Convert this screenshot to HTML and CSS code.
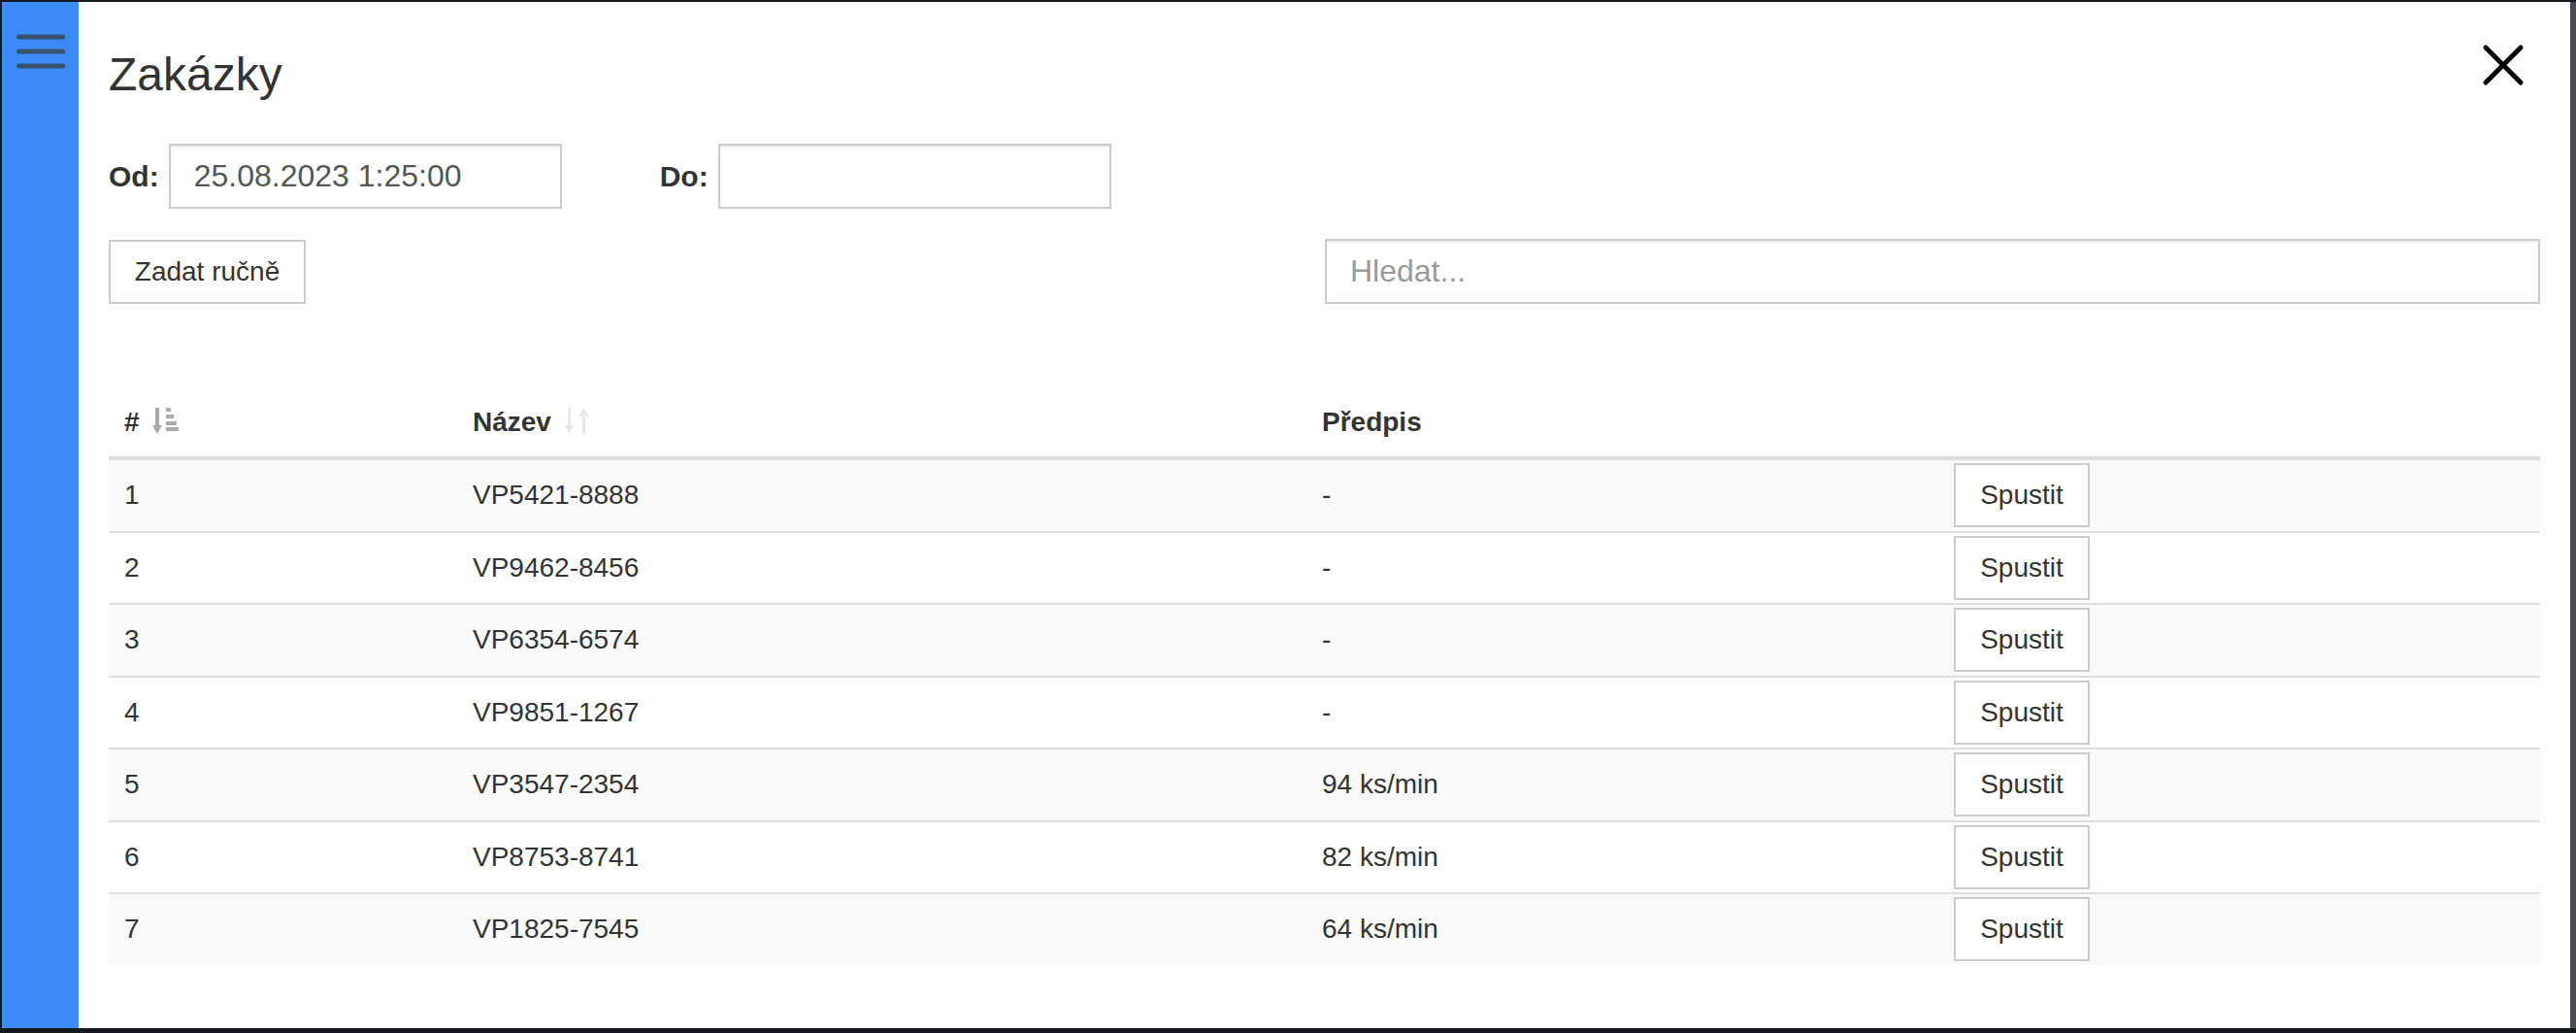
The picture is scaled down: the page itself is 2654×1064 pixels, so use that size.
FILE: index.html
```html
<!DOCTYPE html>
<html lang="cs">

<head>
    <meta charset="UTF-8">
    <meta name="viewport" content="width=device-width, initial-scale=1.0">
    <title>Zakázky</title>
    <link rel="stylesheet" href="styles.css">
</head>

<body>
    <div class="app">
        <div class="sidebar">
            <svg class="menu-icon" width="50" height="40" viewBox="0 0 50 40">
                <g stroke="#37516f" stroke-width="5" stroke-linecap="round">
                    <line x1="2.5" y1="5" x2="47.5" y2="5" />
                    <line x1="2.5" y1="20" x2="47.5" y2="20" />
                    <line x1="2.5" y1="35" x2="47.5" y2="35" />
                </g>
            </svg>
        </div>

        <div class="modal">
            <div class="modal-header">
                <h1>Zakázky</h1>
                <button class="close-btn">
                    <svg width="44" height="44" viewBox="0 0 44 44">
                        <g stroke="#000" stroke-width="5" stroke-linecap="round">
                            <line x1="4" y1="4" x2="40" y2="40" />
                            <line x1="40" y1="4" x2="4" y2="40" />
                        </g>
                    </svg>
                </button>
            </div>

            <div class="dates">
                <label>Od:</label>
                <input type="text" class="field" value="25.08.2023 1:25:00">
                <label class="to-label">Do:</label>
                <input type="text" class="field">
            </div>

            <div class="tools">
                <button class="btn manual-btn">Zadat ručně</button>
                <input type="text" class="field search" placeholder="Hledat...">
            </div>

            <table class="orders">
                <colgroup>
                    <col style="width: 359px">
                    <col style="width: 875px">
                    <col style="width: 651px">
                    <col style="width: 620px">
                </colgroup>
                <thead>
                    <tr>
                        <th>#
                            <svg class="sort-icon" width="28" height="28" viewBox="0 0 28 28">
                                <g fill="#aaaaaa">
                                    <rect x="3" y="0" width="4" height="20" />
                                    <polygon points="0,18 10,18 5,27" />
                                    <rect x="14" y="0" width="5" height="4" />
                                    <rect x="14" y="7" width="8" height="4" />
                                    <rect x="14" y="14" width="11" height="4" />
                                    <rect x="14" y="20" width="13" height="4" />
                                </g>
                            </svg>
                        </th>
                        <th>Název
                            <svg class="sort-icon" width="28" height="28" viewBox="0 0 28 28">
                                <g fill="#e8e8e8">
                                    <rect x="3" y="0" width="3" height="20" />
                                    <polygon points="0,18 9,18 4.5,27" />
                                    <rect x="18" y="8" width="3" height="19" />
                                    <polygon points="14,9 25,9 19.5,0" />
                                </g>
                            </svg>
                        </th>
                        <th>Předpis</th>
                        <th></th>
                    </tr>
                </thead>
                <tbody>
                    <tr>
                        <td>1</td>
                        <td>VP5421-8888</td>
                        <td>-</td>
                        <td><button class="btn run-btn">Spustit</button></td>
                    </tr>
                    <tr>
                        <td>2</td>
                        <td>VP9462-8456</td>
                        <td>-</td>
                        <td><button class="btn run-btn">Spustit</button></td>
                    </tr>
                    <tr>
                        <td>3</td>
                        <td>VP6354-6574</td>
                        <td>-</td>
                        <td><button class="btn run-btn">Spustit</button></td>
                    </tr>
                    <tr>
                        <td>4</td>
                        <td>VP9851-1267</td>
                        <td>-</td>
                        <td><button class="btn run-btn">Spustit</button></td>
                    </tr>
                    <tr>
                        <td>5</td>
                        <td>VP3547-2354</td>
                        <td>94 ks/min</td>
                        <td><button class="btn run-btn">Spustit</button></td>
                    </tr>
                    <tr>
                        <td>6</td>
                        <td>VP8753-8741</td>
                        <td>82 ks/min</td>
                        <td><button class="btn run-btn">Spustit</button></td>
                    </tr>
                    <tr>
                        <td>7</td>
                        <td>VP1825-7545</td>
                        <td>64 ks/min</td>
                        <td><button class="btn run-btn">Spustit</button></td>
                    </tr>
                </tbody>
            </table>
        </div>
    </div>
</body>

</html>
```

FILE: styles.css
```css
* {
    box-sizing: border-box;
}

body {
    margin: 0;
    background-color: #15191d;
    font-family: "Liberation Sans", Arial, sans-serif;
    color: #333;
}

.app {
    display: flex;
    height: 1064px;
    padding: 2px 0 5px 2px;
}

.sidebar {
    width: 79px;
    background-color: #3c8af6;
    padding: 31px 0 0 15px;
}

.menu-icon {
    display: block;
}

.modal {
    width: 2573px;
    background-color: white;
    padding: 48px 31px 0 31px;
    border-right: 6px solid #4a4d52;
}

.modal-header {
    display: flex;
    justify-content: space-between;
    align-items: flex-start;
}

h1 {
    margin: 0;
    font-size: 48px;
    line-height: 53px;
    font-weight: normal;
    color: #333;
}

.close-btn {
    border: none;
    background: none;
    padding: 0;
    margin: -5px 16px 0 0;
    cursor: pointer;
}

.close-btn svg {
    display: block;
}

.dates {
    display: flex;
    align-items: center;
    margin-top: 45px;
}

.dates label {
    font-weight: bold;
    font-size: 30px;
    margin-right: 10px;
}

.dates .to-label {
    margin-left: 101px;
}

.field {
    height: 67px;
    width: 405px;
    border: 2px solid #ccc;
    box-shadow: inset 0 2px 2px rgba(0, 0, 0, 0.075);
    padding: 0 24px;
    font-family: "Liberation Sans", Arial, sans-serif;
    font-size: 32px;
    color: #555;
    outline: none;
}

.field::placeholder {
    color: #999;
}

.tools {
    display: flex;
    justify-content: space-between;
    align-items: flex-start;
    margin-top: 31px;
}

.search {
    width: 1252px;
}

.btn {
    background-color: white;
    border: 2px solid #ccc;
    font-family: "Liberation Sans", Arial, sans-serif;
    font-size: 28px;
    color: #333;
    cursor: pointer;
}

.manual-btn {
    height: 66px;
    width: 203px;
    padding: 0;
    margin-top: 1px;
}

.run-btn {
    height: 66px;
    width: 140px;
    padding: 0;
    vertical-align: middle;
}

.orders {
    width: 100%;
    margin-top: 82px;
    border-collapse: separate;
    border-spacing: 0;
    table-layout: fixed;
    font-size: 28px;
}

.orders th {
    text-align: left;
    font-weight: bold;
    line-height: 34px;
    padding: 23px 16px 18px 16px;
    border-bottom: 4px solid #ddd;
    white-space: nowrap;
}

.sort-icon {
    vertical-align: -4px;
    margin-left: 6px;
}

.orders td {
    line-height: 34px;
    padding: 3.25px 16px;
    border-top: 2px solid #ddd;
    vertical-align: middle;
}

.orders tbody tr:first-child td {
    border-top: none;
}

.orders tbody tr:nth-child(odd) td {
    background-color: #f9f9f9;
}
```
